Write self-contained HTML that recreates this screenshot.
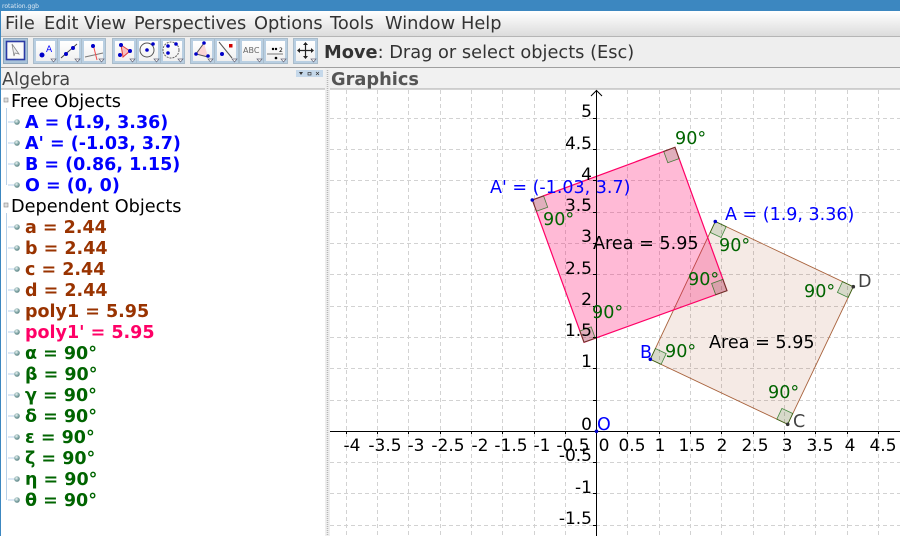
<!DOCTYPE html>
<html><head><meta charset="utf-8"><style>
html,body{margin:0;padding:0;background:#fff}
svg{display:block;font-family:"DejaVu Sans",sans-serif}
.m{font-size:17.8px;fill:#333}
.al{font-size:17.5px;font-weight:bold}
.t{font-size:17.6px;fill:#000}
.n{font-size:17px;fill:#000}
.g{font-size:17.6px;fill:#006400}
.b{font-size:17.5px;fill:#0000ff}
</style></head><body>
<svg width="900" height="536" viewBox="0 0 900 536" xmlns="http://www.w3.org/2000/svg">
<defs>
<linearGradient id="mb" x1="0" y1="0" x2="0" y2="1"><stop offset="0" stop-color="#ffffff"/><stop offset="1" stop-color="#dcdcdc"/></linearGradient>
<linearGradient id="btn" x1="0" y1="0" x2="0" y2="1"><stop offset="0" stop-color="#ffffff"/><stop offset="1" stop-color="#f0f0f0"/></linearGradient>
<radialGradient id="mar" cx=".4" cy=".35" r=".7"><stop offset="0" stop-color="#eef4f4"/><stop offset=".6" stop-color="#7fa6a6"/><stop offset="1" stop-color="#5d7f80"/></radialGradient>
<g id="bt"><rect x=".5" y=".5" width="24" height="25" fill="#b9cfe2" stroke="#a9bccb"/><rect x="3" y="3" width="19" height="20" fill="url(#btn)"/><path d="M18 21h5l-2.500 3z" fill="#fff" stroke="#667" stroke-width=".7"/></g>
<g id="mk"><line x1="0" y1="0" x2="7" y2="0" stroke="#b8d0e8" stroke-width="1"/><circle cx="9" cy="0" r="2.800" fill="url(#mar)"/></g>
</defs>

<rect width="900" height="536" fill="#fff"/>
<rect width="900" height="11" fill="#3c87c0"/>
<text x="2" y="8" font-size="6.500" fill="#dfeaf3" textLength="37" lengthAdjust="spacingAndGlyphs">rotation.ggb</text>
<rect x="0" y="11" width="1" height="525" fill="#3c87c0"/>

<rect x="1" y="11" width="899" height="25" fill="url(#mb)"/>
<line x1="1" y1="36.500" x2="900" y2="36.500" stroke="#b5b5b5"/>
<text class="m" x="5" y="29">File</text>
<text class="m" x="44" y="29">Edit</text>
<text class="m" x="84" y="29">View</text>
<text class="m" x="134" y="29">Perspectives</text>
<text class="m" x="254" y="29">Options</text>
<text class="m" x="330" y="29">Tools</text>
<text class="m" x="385" y="29">Window</text>
<text class="m" x="461" y="29">Help</text>

<rect x="1" y="37" width="899" height="30" fill="#eeeeee"/>
<line x1="1" y1="67.500" x2="900" y2="67.500" stroke="#9f9f9f"/>

<!-- toolbar -->
<g transform="translate(3,38)">
<rect x=".5" y=".5" width="24" height="25" fill="#a9c3da" stroke="#8fa8bd"/>
<rect x="3.500" y="3.500" width="18" height="18" fill="#fafafa" stroke="#2b3aa5" stroke-width="1.600"/>
<path d="M9 6l7 10-4-1-1 3z" fill="#eee" stroke="#888" stroke-width=".8"/>
</g>
<use href="#bt" x="33" y="38"/><use href="#bt" x="57" y="38"/><use href="#bt" x="81" y="38"/>
<circle cx="42" cy="55" r="2.500" fill="#0000c8"/><text x="46" y="52" font-size="9" fill="#0000ff">A</text>
<line x1="61" y1="58" x2="77" y2="44" stroke="#444"/><circle cx="66" cy="54" r="2" fill="#0000c8"/><circle cx="73" cy="48" r="2" fill="#0000c8"/>
<line x1="85" y1="57" x2="103" y2="53" stroke="#777"/><line x1="93" y1="44" x2="97" y2="60" stroke="#f05050"/><circle cx="93" cy="46" r="2" fill="#0000c8"/>

<use href="#bt" x="112" y="38"/><use href="#bt" x="136" y="38"/><use href="#bt" x="160" y="38"/>
<path d="M121 45l9 6-7 6z" fill="#f9c0c0" stroke="#e04040"/><circle cx="121" cy="45" r="2" fill="#0000c8"/><circle cx="130" cy="51" r="2" fill="#0000c8"/><circle cx="120" cy="55" r="2" fill="#0000c8"/>
<circle cx="147" cy="50" r="7" fill="none" stroke="#555"/><circle cx="147" cy="50" r="1.800" fill="#0000c8"/><circle cx="153" cy="44" r="1.800" fill="#0000c8"/>
<circle cx="171" cy="50" r="8" fill="none" stroke="#666" stroke-dasharray="2 1"/><circle cx="168" cy="46" r="1.800" fill="#0000c8"/><circle cx="176" cy="44" r="1.800" fill="#0000c8"/><circle cx="168" cy="53" r="1.800" fill="#0000c8"/>

<use href="#bt" x="190" y="38"/><use href="#bt" x="214" y="38"/><use href="#bt" x="239" y="38"/><use href="#bt" x="263" y="38"/>
<path d="M204 43l-8 11 12 3" fill="#fbd5d5" stroke="#555"/><circle cx="204" cy="43" r="1.800" fill="#0000c8"/><circle cx="196" cy="54" r="1.800" fill="#0000c8"/><circle cx="208" cy="56" r="1.800" fill="#0000c8"/>
<line x1="219" y1="42" x2="232" y2="58" stroke="#555"/><rect x="229" y="44" width="3.500" height="3.500" fill="#d00000"/><circle cx="222" cy="54" r="2" fill="#0000c8"/>
<text x="243" y="53" font-size="8" fill="#666">ABC</text>
<line x1="267" y1="54" x2="283" y2="54" stroke="#777"/><circle cx="273" cy="49" r="1.200" fill="#000"/><circle cx="276" cy="49" r="1.200" fill="#000"/><circle cx="276" cy="58" r="1.300" fill="#000"/><text x="279" y="52" font-size="6" fill="#000">2</text>

<use href="#bt" x="293" y="38"/>
<path d="M305.500 43v15M298 50.500h15" stroke="#222" stroke-width="1.200"/><path d="M305.500 42l-2.500 3h5zM305.500 59l-2.500-3h5zM297 50.500l3-2.500v5zM314 50.500l-3-2.500v5z" fill="#222"/>

<text x="324" y="58" font-size="17.800" fill="#333"><tspan font-weight="bold">Move</tspan>: Drag or select objects (Esc)</text>

<!-- panel headers -->
<rect x="1" y="68" width="899" height="21" fill="#f1f1f1"/>
<line x1="1" y1="89" x2="900" y2="89" stroke="#a9a9a9" stroke-width="1"/>
<text x="2" y="85" font-size="17.600" fill="#444">Algebra</text>
<text x="331" y="85" font-size="17.800" font-weight="bold" fill="#555">Graphics</text>
<rect x="296" y="70" width="27" height="7" fill="#c5d8ea"/>
<path d="M299 72h4l-2 3z" fill="#333"/><rect x="308" y="72.500" width="3" height="2.500" fill="none" stroke="#333" stroke-width=".7"/><path d="M316 72l3 3M319 72l-3 3" stroke="#333" stroke-width=".7"/>

<!-- divider -->
<rect x="325" y="68" width="5" height="468" fill="#efefef"/>
<line x1="327.500" y1="70" x2="327.500" y2="536" stroke="#b5b5b5" stroke-dasharray="1 1" stroke-width="1.500"/>

<!-- algebra -->
<line x1="6.500" y1="108" x2="6.500" y2="185" stroke="#b8d0e8"/>
<line x1="6.500" y1="213" x2="6.500" y2="500" stroke="#b8d0e8"/>
<rect x="4" y="98" width="4" height="4" fill="#ddd" stroke="#888" stroke-width=".6"/>
<rect x="4" y="203" width="4" height="4" fill="#ddd" stroke="#888" stroke-width=".6"/>
<text x="11" y="107" font-size="17.700" fill="#000">Free Objects</text>
<text x="11" y="212" font-size="17.700" fill="#000">Dependent Objects</text>
<g fill="#0000ff" class="al">
<text x="25" y="128">A = (1.9, 3.36)</text>
<text x="25" y="149">A' = (-1.03, 3.7)</text>
<text x="25" y="170">B = (0.86, 1.15)</text>
<text x="25" y="191">O = (0, 0)</text>
</g>
<g fill="#993300" class="al">
<text x="25" y="233">a = 2.44</text>
<text x="25" y="254">b = 2.44</text>
<text x="25" y="275">c = 2.44</text>
<text x="25" y="296">d = 2.44</text>
<text x="25" y="317">poly1 = 5.95</text>
</g>
<text class="al" fill="#ff0066" x="25" y="338">poly1' = 5.95</text>
<g fill="#006400" class="al">
<text x="25" y="359">α = 90°</text>
<text x="25" y="380">β = 90°</text>
<text x="25" y="401">γ = 90°</text>
<text x="25" y="422">δ = 90°</text>
<text x="25" y="443">ε = 90°</text>
<text x="25" y="464">ζ = 90°</text>
<text x="25" y="485">η = 90°</text>
<text x="25" y="506">θ = 90°</text>
</g>
<use href="#mk" x="8" y="122"/><use href="#mk" x="8" y="143"/><use href="#mk" x="8" y="164"/><use href="#mk" x="8" y="185"/>
<use href="#mk" x="8" y="227"/><use href="#mk" x="8" y="248"/><use href="#mk" x="8" y="269"/><use href="#mk" x="8" y="290"/><use href="#mk" x="8" y="311"/><use href="#mk" x="8" y="332"/>
<use href="#mk" x="8" y="353"/><use href="#mk" x="8" y="374"/><use href="#mk" x="8" y="395"/><use href="#mk" x="8" y="416"/><use href="#mk" x="8" y="437"/><use href="#mk" x="8" y="458"/><use href="#mk" x="8" y="479"/><use href="#mk" x="8" y="500"/>

<!-- grid -->
<g stroke="#d2d2d2" stroke-width="1" stroke-dasharray="4 3">
<path d="M346.500 90V536M377.500 90V536M408.500 90V536M440.500 90V536M471.500 90V536M502.500 90V536M534.500 90V536M565.500 90V536M627.500 90V536M659.500 90V536M690.500 90V536M721.500 90V536M753.500 90V536M784.500 90V536M815.500 90V536M847.500 90V536M878.500 90V536"/>
<path d="M330 118.500H900M330 149.500H900M330 180.500H900M330 212.500H900M330 243.500H900M330 274.500H900M330 306.500H900M330 337.500H900M330 368.500H900M330 400.500H900M330 462.500H900M330 493.500H900M330 525.500H900"/>
</g>

<!-- polygons -->
<path d="M715.300 221.500L853.300 286.700L787.700 424.300L650.300 359.300Z" fill="#993300" fill-opacity=".1" stroke="#a8623c" stroke-width=".9"/>
<path d="M532.300 200L675 147.300L727 290.700L584 342.300Z" fill="#ff0066" fill-opacity=".27" stroke="#ff0066" stroke-width="1.200"/>

<!-- axes -->
<g stroke="#000" stroke-width="1" fill="none">
<path d="M596.500 90V536"/><path d="M330 431.500H900"/>
<path d="M591 96L596.500 90.500L602 96"/>
<path d="M593 118.500h3M593 149.500h3M593 180.500h3M593 212.500h3M593 243.500h3M593 274.500h3M593 306.500h3M593 337.500h3M593 368.500h3M593 400.500h3M593 462.500h3M593 493.500h3M593 525.500h3"/>
<path d="M346.500 431v3M377.500 431v3M408.500 431v3M440.500 431v3M471.500 431v3M502.500 431v3M534.500 431v3M565.500 431v3M627.500 431v3M659.500 431v3M690.500 431v3M721.500 431v3M753.500 431v3M784.500 431v3M815.500 431v3M847.500 431v3M878.500 431v3"/>
</g>

<!-- right-angle markers -->
<g fill="#006400" fill-opacity=".12" stroke="#006400" stroke-opacity=".7" stroke-width=".8">
<path d="M715.300 221.500l10.900 5.100-5.100 10.900-10.900-5.100z"/>
<path d="M650.300 359.300l5.100-10.800 10.800 5.100-5.100 10.800z"/>
<path d="M787.700 424.300l-10.900-5.100 5.100-10.800 10.800 5.100z"/>
<path d="M853.300 286.700l-5.100 10.800-10.800-5.100 5.100-10.800z"/>
<path d="M532.300 200l11.300-4.100 4.100 11.300-11.300 4.100z"/>
<path d="M675 147.300l4.100 11.300-11.300 4.100-4.100-11.300z"/>
<path d="M727 290.700l-11.300 4.100-4.100-11.300 11.300-4.100z"/>
<path d="M584 342.300l-4.100-11.300 11.300-4.100 4.100 11.300z"/>
</g>

<!-- points -->
<circle cx="715.300" cy="221.500" r="1.800" fill="#0000c8"/>
<circle cx="532.300" cy="200" r="1.800" fill="#0000c8"/>
<circle cx="650.300" cy="359.300" r="1.800" fill="#0000c8"/>
<circle cx="596.500" cy="431.300" r="1.800" fill="#0000c8"/>
<circle cx="787.700" cy="424.300" r="1.800" fill="#333"/>
<circle cx="853.300" cy="286.700" r="1.800" fill="#333"/>

<!-- axis labels -->
<g text-anchor="middle">
<text x="352" y="451" class="n">-4</text><text x="385" y="451" class="n">-3.5</text><text x="416" y="451" class="n">-3</text><text x="448" y="451" class="n">-2.5</text><text x="480" y="451" class="n">-2</text><text x="511" y="451" class="n">-1.5</text><text x="542" y="451" class="n">-1</text><text x="573" y="451" class="n">-0.5</text>
<text x="604" y="451" class="n">0</text><text x="632" y="451" class="n">0.5</text><text x="660" y="451" class="n">1</text><text x="692" y="451" class="n">1.5</text><text x="722" y="451" class="n">2</text><text x="755" y="451" class="n">2.5</text><text x="787" y="451" class="n">3</text><text x="820" y="451" class="n">3.5</text><text x="850" y="451" class="n">4</text><text x="883" y="451" class="n">4.5</text>
</g>
<g text-anchor="end">
<text x="592" y="117" class="n">5</text><text x="592" y="149" class="n">4.5</text><text x="592" y="180" class="n">4</text><text x="592" y="211" class="n">3.5</text><text x="592" y="242" class="n">3</text><text x="592" y="274" class="n">2.5</text><text x="592" y="305" class="n">2</text><text x="592" y="336" class="n">1.5</text><text x="592" y="367" class="n">1</text><text x="592" y="430" class="n">0</text><text x="592" y="461" class="n">-0.5</text><text x="592" y="493" class="n">-1</text><text x="592" y="524" class="n">-1.5</text>
</g>

<!-- labels -->
<text class="b" x="490" y="193">A' = (-1.03, 3.7)</text>
<text class="b" x="725" y="220">A = (1.9, 3.36)</text>
<text class="b" x="640" y="358">B</text>
<text class="b" x="597" y="430">O</text>
<text x="793" y="427" font-size="17.500" fill="#444">C</text>
<text x="858" y="287" font-size="17.500" fill="#444">D</text>
<text class="t" x="593" y="249">Area = 5.95</text>
<text class="t" x="709" y="348">Area = 5.95</text>
<text class="g" x="675" y="144">90°</text>
<text class="g" x="543" y="225">90°</text>
<text class="g" x="592" y="318">90°</text>
<text class="g" x="688" y="285">90°</text>
<text class="g" x="719" y="251">90°</text>
<text class="g" x="804" y="297">90°</text>
<text class="g" x="665" y="357">90°</text>
<text class="g" x="768" y="398">90°</text>
</svg>
</body></html>
